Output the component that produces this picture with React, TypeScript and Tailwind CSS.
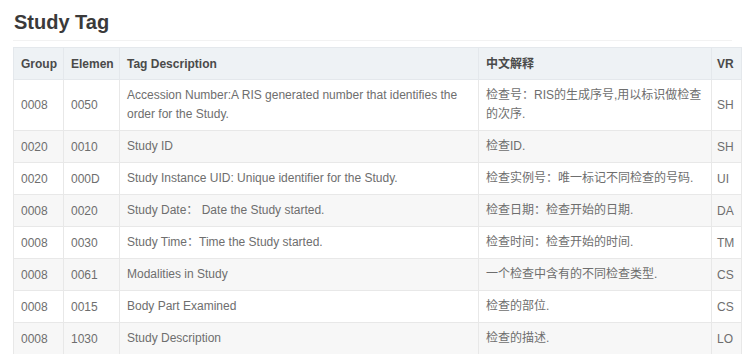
import React from "react";

const rows = [
  ["0008", "0050", "Accession Number:A RIS generated number that identifies the order for the Study.", "检查号：RIS的生成序号,用以标识做检查的次序.", "SH"],
  ["0020", "0010", "Study ID", "检查ID.", "SH"],
  ["0020", "000D", "Study Instance UID: Unique identifier for the Study.", "检查实例号：唯一标记不同检查的号码.", "UI"],
  ["0008", "0020", "Study Date：  Date the Study started.", "检查日期：检查开始的日期.", "DA"],
  ["0008", "0030", "Study Time：Time the Study started.", "检查时间：检查开始的时间.", "TM"],
  ["0008", "0061", "Modalities in Study", "一个检查中含有的不同检查类型.", "CS"],
  ["0008", "0015", "Body Part Examined", "检查的部位.", "CS"],
  ["0008", "1030", "Study Description", "检查的描述.", "LO"],
];

export default function App() {
  return (
    <div className="w-[745px] h-[354px] overflow-hidden bg-white px-[13px] pt-[10px] font-['Liberation_Sans','Noto_Sans_CJK_SC',sans-serif]">
      <h2 className="text-[20px] leading-[24px] font-bold text-[#3a3a3a] pl-px">Study Tag</h2>
      <div className="mt-[6px] border-t border-[#f2f2f2]" />
      <table className="mt-[6px] w-[728px] table-fixed border-collapse text-[12px] text-[#6e6e6e]">
        <colgroup>
          <col className="w-[50px]" />
          <col className="w-[56px]" />
          <col className="w-[359px]" />
          <col className="w-[233px]" />
          <col className="w-[30px]" />
        </colgroup>
        <thead>
          <tr className="h-[32px] bg-[#eef2f5] text-[#4a4a4a] font-bold">
            <th className="border border-[#e4e8ec] px-[7px] text-left">Group</th>
            <th className="border border-[#e4e8ec] px-[7px] text-left whitespace-nowrap overflow-hidden">Elemen</th>
            <th className="border border-[#e4e8ec] px-[7px] text-left">Tag Description</th>
            <th className="border border-[#e4e8ec] px-[7px] text-left">中文解释</th>
            <th className="border border-[#e4e8ec] px-[5px] text-left">VR</th>
          </tr>
        </thead>
        <tbody>
          {rows.map((r, i) => (
            <tr key={i} className={i % 2 === 1 ? "bg-[#f7f7f7]" : "bg-white"}>
              <td className="border border-[#e8e8e8] px-[7px] h-[32px]">{r[0]}</td>
              <td className="border border-[#e8e8e8] px-[7px]">{r[1]}</td>
              <td className="border border-[#e8e8e8] px-[7px] py-[6px] leading-[19px]">{r[2]}</td>
              <td className="border border-[#e8e8e8] px-[7px] py-[6px] leading-[19px]">{r[3]}</td>
              <td className="border border-[#e8e8e8] px-[5px]">{r[4]}</td>
            </tr>
          ))}
        </tbody>
      </table>
    </div>
  );
}
